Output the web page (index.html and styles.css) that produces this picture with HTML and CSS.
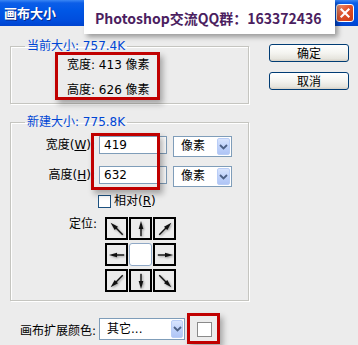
FILE: index.html
```html
<!DOCTYPE html>
<html>
<head>
<meta charset="utf-8">
<link rel="stylesheet" href="styles.css">
</head>
<body>
<div class="titlebar">
  <span class="title">画布大小</span>
  <span class="close"><svg width="18" height="18" viewBox="0 0 18 18"><path d="M5 5 L13 13 M13 5 L5 13" stroke="#fff" stroke-width="2.4" stroke-linecap="square"/></svg></span>
</div>
<div class="main">
  <div class="left">
    <fieldset class="group g1">
      <legend>当前大小: 757.4K</legend>
      <div class="info">宽度: 413 像素</div>
      <div class="info">高度: 626 像素</div>
    </fieldset>
    <fieldset class="group g2">
      <legend>新建大小: 775.8K</legend>
      <div class="row">
        <span class="lbl">宽度(<u>W</u>):</span>
        <div class="input">419</div>
        <div class="select unit"><span class="val">像素</span><span class="arrow"><svg width="9" height="6" viewBox="0 0 9 6"><path d="M1 1 L4.5 4.5 L8 1" fill="none" stroke="#4d6185" stroke-width="1.8"/></svg></span></div>
      </div>
      <div class="row r2">
        <span class="lbl">高度(<u>H</u>):</span>
        <div class="input">632</div>
        <div class="select unit"><span class="val">像素</span><span class="arrow"><svg width="9" height="6" viewBox="0 0 9 6"><path d="M1 1 L4.5 4.5 L8 1" fill="none" stroke="#4d6185" stroke-width="1.8"/></svg></span></div>
      </div>
      <div class="checkrow">
        <span class="checkbox"></span>
        <span class="checklbl">相对(<u>R</u>)</span>
      </div>
      <div class="anchorrow">
        <span class="lbl anchorlbl">定位:</span>
        <div class="grid">
          <div class="cell"><svg viewBox="0 0 20 20"><g transform="rotate(-45 10 10)"><rect x="9.2" y="7" width="1.6" height="12"/><polygon points="10,0 7.4,9 12.6,9"/></g></svg></div>
          <div class="cell"><svg viewBox="0 0 20 20"><g><rect x="9.2" y="7" width="1.6" height="11"/><polygon points="10,1 7.4,10 12.6,10"/></g></svg></div>
          <div class="cell"><svg viewBox="0 0 20 20"><g transform="rotate(45 10 10)"><rect x="9.2" y="7" width="1.6" height="12"/><polygon points="10,0 7.4,9 12.6,9"/></g></svg></div>
          <div class="cell"><svg viewBox="0 0 20 20"><g transform="rotate(-90 10 10)"><rect x="9.2" y="7" width="1.6" height="11"/><polygon points="10,1 7.4,10 12.6,10"/></g></svg></div>
          <div class="cell center"></div>
          <div class="cell"><svg viewBox="0 0 20 20"><g transform="rotate(90 10 10)"><rect x="9.2" y="7" width="1.6" height="11"/><polygon points="10,1 7.4,10 12.6,10"/></g></svg></div>
          <div class="cell"><svg viewBox="0 0 20 20"><g transform="rotate(-135 10 10)"><rect x="9.2" y="7" width="1.6" height="12"/><polygon points="10,0 7.4,9 12.6,9"/></g></svg></div>
          <div class="cell"><svg viewBox="0 0 20 20"><g transform="rotate(180 10 10)"><rect x="9.2" y="7" width="1.6" height="11"/><polygon points="10,1 7.4,10 12.6,10"/></g></svg></div>
          <div class="cell"><svg viewBox="0 0 20 20"><g transform="rotate(135 10 10)"><rect x="9.2" y="7" width="1.6" height="12"/><polygon points="10,0 7.4,9 12.6,9"/></g></svg></div>
        </div>
      </div>
    </fieldset>
    <div class="extrow">
      <span class="extlbl">画布扩展颜色:</span>
      <div class="select ext"><span class="val">其它...</span><span class="arrow"><svg width="9" height="6" viewBox="0 0 9 6"><path d="M1 1 L4.5 4.5 L8 1" fill="none" stroke="#4d6185" stroke-width="1.8"/></svg></span></div>
      <span class="swatch"></span>
    </div>
  </div>
  <div class="right">
    <div class="btn">确定</div>
    <div class="btn">取消</div>
  </div>
</div>

<div class="banner">Photoshop交流QQ群：163372436</div>
<div class="mark m1"></div>
<div class="mark m2"></div>
<div class="mark m3"></div>
</body>
</html>
```

FILE: styles.css
```css
html, body {
  margin: 0;
  padding: 0;
}
body {
  width: 358px;
  height: 345px;
  overflow: hidden;
  position: relative;
  background: #ececec;
  font-family: "DejaVu Sans", "Noto Sans CJK SC", sans-serif;
  font-size: 12px;
  color: #000;
}
u {
  text-decoration: underline;
}
.titlebar {
  height: 26px;
  display: flex;
  align-items: center;
  justify-content: space-between;
  background: linear-gradient(#3a86f4 0, #0c5ee8 3px, #0057e6 40%, #004ddd 80%, #0044d0 100%);
  padding: 0 4px 0 4px;
}
.title {
  font-family: "Noto Sans CJK SC", sans-serif;
  font-weight: 700;
  font-size: 13px;
  color: #fff;
  text-shadow: 1px 1px 0 #0a2a8a;
  line-height: 26px;
}
.close {
  width: 18px;
  height: 18px;
  box-sizing: border-box;
  border: 1px solid #fff;
  border-radius: 3px;
  background: linear-gradient(135deg, #f09a7c 0, #e2522c 45%, #c93b14 100%);
  display: flex;
  align-items: center;
  justify-content: center;
}
.close svg {
  display: block;
  width: 16px;
  height: 16px;
}
.main {
  display: flex;
  align-items: flex-start;
}
.left {
  margin-left: 10px;
  width: 239px;
}
.right {
  margin-left: 20px;
  margin-top: 18px;
  display: flex;
  flex-direction: column;
  gap: 10px;
}
.btn {
  width: 80px;
  height: 18px;
  box-sizing: border-box;
  border: 1px solid #003c74;
  border-radius: 3px;
  background: linear-gradient(#ffffff 0, #f4f4f0 50%, #e6e5de 85%, #d6d0c5 100%);
  font-family: "Noto Sans CJK SC", sans-serif;
  font-size: 12px;
  line-height: 16px;
  text-align: center;
}
.group {
  margin: 0;
  padding: 0;
  min-width: 0;
  border: 1px solid #c5c5c0;
  box-shadow: 1px 1px 0 #fff, inset 1px 1px 0 #fff;
}
.group legend {
  margin-left: 14px;
  padding: 0 2px;
  line-height: 14px;
  color: #0046d5;
}
.g1 {
  margin-top: 13px;
  height: 65px;
  box-sizing: border-box;
}
.info {
  padding-left: 56px;
  line-height: 25px;
  height: 25px;
}
.g2 {
  margin-top: 11px;
  padding: 7px 0 8px 0;
}
.row {
  display: flex;
  align-items: flex-start;
}
.row.r2 {
  margin-top: 9px;
}
.lbl {
  width: 84px;
  text-align: right;
  line-height: 18px;
  white-space: nowrap;
}
.input {
  margin-left: 4px;
  width: 68px;
  height: 18px;
  box-sizing: border-box;
  border: 1px solid #7f9db9;
  background: #fff;
  line-height: 16px;
  padding-left: 4px;
}
.select {
  height: 21px;
  box-sizing: border-box;
  border: 1px solid #7f9db9;
  background: #fff;
  display: flex;
  align-items: center;
  justify-content: space-between;
  padding: 1px;
}
.select .val {
  padding-left: 6px;
  line-height: 17px;
}
.select .arrow {
  width: 13px;
  height: 17px;
  box-sizing: border-box;
  border: 1px solid #b9cdf6;
  border-radius: 2px;
  background: linear-gradient(#d8e4fd, #bcd0fa 60%, #b0c5f5);
  display: flex;
  align-items: center;
  justify-content: center;
}
.select .arrow svg {
  display: block;
}
.unit {
  margin-left: 6px;
  width: 59px;
}
.checkrow {
  margin-top: 8px;
  margin-left: 87px;
  display: flex;
  align-items: center;
  height: 13px;
}
.checkbox {
  width: 13px;
  height: 13px;
  box-sizing: border-box;
  border: 1px solid #1c5180;
  background: #fff;
}
.checklbl {
  margin-left: 3px;
  line-height: 13px;
}
.anchorrow {
  margin-top: 9px;
  display: flex;
  align-items: flex-start;
}
.anchorlbl {
  width: 86px;
  line-height: 14px;
}
.grid {
  margin-left: 8px;
  display: grid;
  grid-template-columns: 23px 23px 23px;
  grid-template-rows: 23px 23px 23px;
  column-gap: 1px;
  row-gap: 3px;
}
.cell {
  box-sizing: border-box;
  border: 2px solid #000;
  display: flex;
  align-items: center;
  justify-content: center;
}
.cell svg {
  width: 18px;
  height: 18px;
  fill: #111;
  filter: drop-shadow(1px 1px 1px rgba(0,0,0,0.35));
}
.cell.center {
  border: 1px solid #8fa8c6;
  border-radius: 3px;
  background: #fff;
}
.extrow {
  margin-top: 17px;
  padding-left: 10px;
  display: flex;
  align-items: center;
}
.extlbl {
  width: 77px;
  white-space: nowrap;
}
.ext {
  margin-left: 2px;
  width: 86px;
  height: 22px;
}
.ext .arrow {
  width: 12px;
  height: 18px;
}
.swatch {
  margin-left: 12px;
  width: 15px;
  height: 15px;
  box-sizing: border-box;
  border: 1px solid #8a8a8a;
  background: #fff;
}
.banner {
  position: absolute;
  left: 84px;
  top: 0;
  width: 251px;
  height: 34px;
  box-sizing: border-box;
  background: #fff;
  box-shadow: 3px 3px 5px rgba(0,0,0,0.35);
  padding-left: 11px;
  padding-top: 6px;
  font-family: "Noto Sans CJK SC", sans-serif;
  font-weight: 700;
  font-size: 14px;
  line-height: 24px;
  color: #4b1e5f;
  white-space: nowrap;
}
.mark {
  position: absolute;
  box-sizing: border-box;
  border: 3px solid #c00000;
  box-shadow: 3px 4px 6px rgba(0,0,0,0.3);
}
.m1 {
  left: 55px;
  top: 52px;
  width: 105px;
  height: 48px;
}
.m2 {
  left: 91px;
  top: 133px;
  width: 69px;
  height: 57px;
}
.m3 {
  left: 187px;
  top: 313px;
  width: 33px;
  height: 31px;
}
```
